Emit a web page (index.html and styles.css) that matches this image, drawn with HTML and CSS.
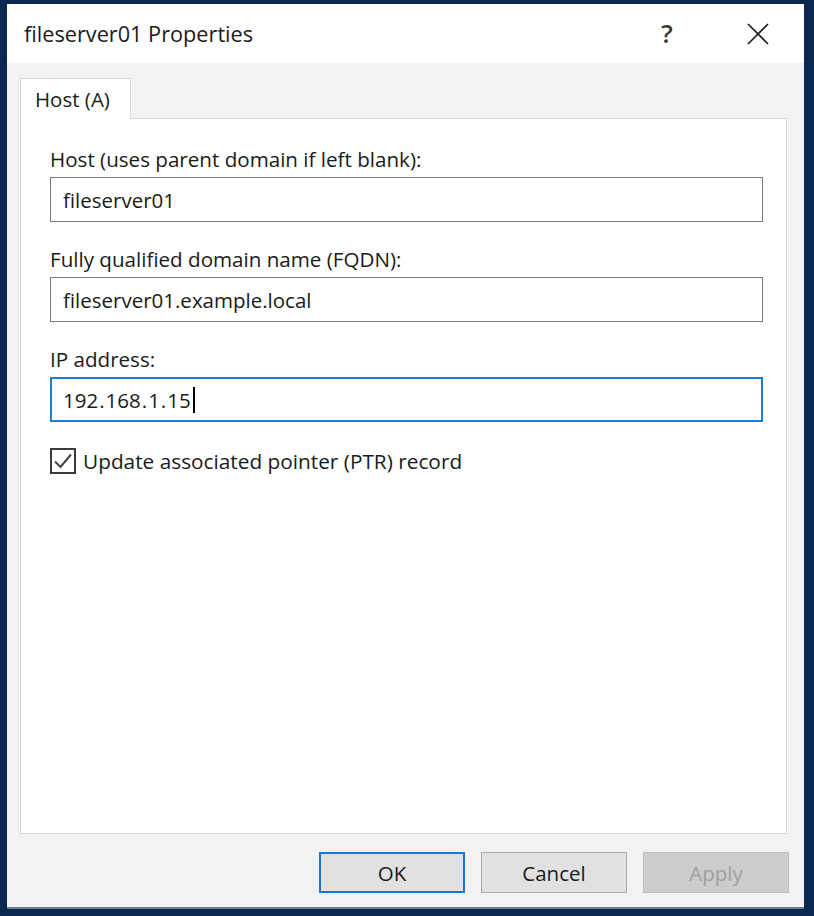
FILE: index.html
```html
<!DOCTYPE html>
<html>
<head>
<meta charset="utf-8">
<link rel="stylesheet" href="styles.css">
</head>
<body>
<div class="window">
  <div class="titlebar">
    <div class="title">fileserver01 Properties</div>
    <div class="help">?</div>
    <div class="close">
      <svg width="22" height="22" viewBox="0 0 22 22"><path d="M1 1L21 21M21 1L1 21" stroke="#1a1a1a" stroke-width="1.6" fill="none"/></svg>
    </div>
  </div>
  <div class="content">
    <div class="tabs">
      <div class="tab">Host (A)</div>
    </div>
    <div class="panel">
      <div class="field">
        <div class="label">Host (uses parent domain if left blank):</div>
        <div class="input">fileserver01</div>
      </div>
      <div class="field">
        <div class="label">Fully qualified domain name (FQDN):</div>
        <div class="input">fileserver01.example.local</div>
      </div>
      <div class="field">
        <div class="label">IP address:</div>
        <div class="input focused"><span class="oct">192</span>.<span class="oct">168</span>.<span class="oct">1</span>.<span class="oct">15</span><span class="caret"></span></div>
      </div>
      <div class="check">
        <div class="box">
          <svg width="22" height="22" viewBox="0 0 22 22"><path d="M3 11.5L8.5 17L19 4.5" stroke="#444" stroke-width="2" fill="none"/></svg>
        </div>
        <div class="check-label">Update associated pointer (PTR) record</div>
      </div>
    </div>
    <div class="buttons">
      <div class="btn default">OK</div>
      <div class="btn">Cancel</div>
      <div class="btn disabled">Apply</div>
    </div>
  </div>
</div>
</body>
</html>
```
FILE: styles.css
```css
html, body {
  margin: 0;
  padding: 0;
  background: #0a2850;
}
body {
  width: 814px;
  height: 916px;
  overflow: hidden;
  font-family: "Open Sans", "Noto Sans", sans-serif;
  color: #1a1a1a;
}
.window {
  margin: 4px 0 0 7px;
  width: 797px;
  height: 905px;
  background: #f4f1f5;
  box-sizing: border-box;
  border-bottom: 2px solid #6a7a8e;
  display: flex;
  flex-direction: column;
}
.titlebar {
  height: 59px;
  background: #ffffff;
  display: flex;
  align-items: center;
  flex-shrink: 0;
}
.title {
  font-size: 21.7px;
  margin-left: 17px;
  flex: 1;
  color: #1a1a1a;
}
.help {
  font-size: 26px;
  font-weight: 600;
  width: 20px;
  text-align: center;
  color: #3a3a3a;
  margin-right: 70px;
  margin-top: -2px;
}
.close {
  width: 22px;
  height: 22px;
  margin-right: 35px;
  display: flex;
}
.content {
  flex: 1;
  display: flex;
  flex-direction: column;
  padding: 15px 17px 0 13px;
}
.tabs {
  display: flex;
  height: 40px;
  position: relative;
  z-index: 1;
}
.tab {
  width: 111px;
  box-sizing: border-box;
  height: 41px;
  background: #ffffff;
  border: 1px solid #d9d9d9;
  border-bottom: none;
  font-size: 20.5px;
  padding: 6px 0 0 14px;
}
.panel {
  height: 716px;
  box-sizing: border-box;
  background: #ffffff;
  border: 1px solid #d9d9d9;
  padding: 22px 23px 0 29px;
}
.field {
  display: flex;
  flex-direction: column;
}
.label {
  font-size: 20.6px;
  height: 36px;
  line-height: 36px;
}
.field + .field {
  margin-top: 19px;
}
.input {
  height: 45px;
  box-sizing: border-box;
  border: 1px solid #7a7a7a;
  font-size: 20.5px;
  padding: 0 12px;
  display: flex;
  align-items: center;
  background: #fff;
}
.input.focused {
  border: 2px solid #1a7fd4;
  padding-left: 11px;
}
.oct {
  margin: 0 1px;
}
.oct:first-child {
  margin-left: 0;
}
.caret {
  width: 2px;
  height: 26px;
  background: #000;
  margin-left: 1px;
}
.check {
  display: flex;
  align-items: center;
  margin-top: 25px;
}
.box {
  width: 26px;
  height: 26px;
  box-sizing: border-box;
  border: 2px solid #3a3a3a;
  display: flex;
  align-items: center;
  justify-content: center;
  margin-left: 0;
}
.check-label {
  font-size: 20.8px;
  margin-left: 7px;
}
.buttons {
  display: flex;
  justify-content: flex-end;
  gap: 16px;
  margin-top: 18px;
  margin-right: -2px;
}
.btn {
  width: 146px;
  height: 41px;
  box-sizing: border-box;
  background: #e1e1e1;
  border: 1px solid #adadad;
  font-size: 20.5px;
  display: flex;
  align-items: center;
  justify-content: center;
}
.btn.default {
  border: 2px solid #1478d4;
}
.btn.disabled {
  background: #cccccc;
  border-color: #bfbfbf;
  color: #a0a0a0;
}
```
